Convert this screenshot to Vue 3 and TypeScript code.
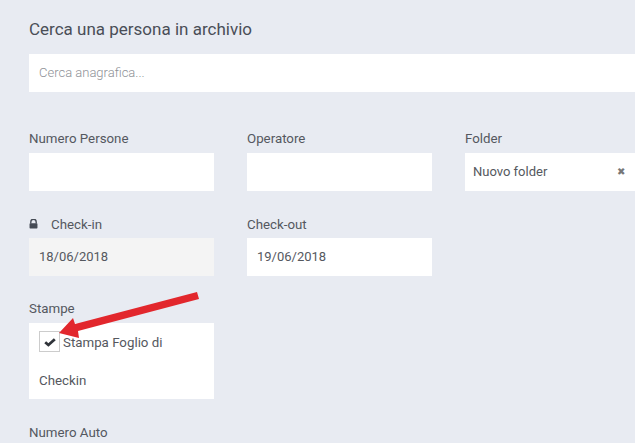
<template>
  <div class="page">
    <h2 class="title">Cerca una persona in archivio</h2>
    <div class="search">Cerca anagrafica...</div>

    <div class="row first">
      <div class="field">
        <label>Numero Persone</label>
        <div class="box"></div>
      </div>
      <div class="field">
        <label>Operatore</label>
        <div class="box"></div>
      </div>
      <div class="field">
        <label>Folder</label>
        <div class="box folder">
          <span>Nuovo folder</span>
          <span class="clear">✖</span>
        </div>
      </div>
    </div>

    <div class="row dates">
      <div class="field">
        <label class="locked">
          <svg class="lock" viewBox="0 0 10 11" width="9" height="10">
            <path d="M2 5V3.2a3 3 0 0 1 6 0V5" fill="none" stroke="#444a54" stroke-width="1.5" />
            <rect x="0.6" y="4.6" width="8.8" height="6" rx="0.8" fill="#444a54" />
          </svg>
          Check-in
        </label>
        <div class="box disabled">18/06/2018</div>
      </div>
      <div class="field">
        <label>Check-out</label>
        <div class="box">19/06/2018</div>
      </div>
    </div>

    <div class="row stampe">
      <div class="field">
        <label>Stampe</label>
        <div class="prints">
          <span class="check">
            <svg viewBox="0 0 12 10" width="12" height="10">
              <path d="M1.2 5.2 4.4 8 10.8 2.2" fill="none" stroke="#30343a" stroke-width="2.8" />
            </svg>
          </span>
          <span class="print-label">Stampa Foglio di Checkin</span>
        </div>
      </div>
    </div>

    <div class="row">
      <div class="field">
        <label>Numero Auto</label>
      </div>
    </div>

    <svg class="arrow" viewBox="0 0 635 443" width="635" height="443">
      <path d="M197 292 75 324 73 318 59 333 79 338 78 331 199 299Z" fill="#e2272d" />
    </svg>
  </div>
</template>

<script setup lang="ts">
</script>

<style>
html,
body {
  margin: 0;
  background: #e8ebf2;
  overflow: hidden;
}
</style>

<style scoped>
.page {
  position: relative;
  width: 635px;
  height: 443px;
  overflow: hidden;
  padding: 19px 0 0 29px;
  box-sizing: border-box;
  background: #e8ebf2;
  font-family: Roboto, "Liberation Sans", sans-serif;
  color: #555960;
}

.title {
  margin: 0 0 15px;
  font-size: 17px;
  line-height: 20px;
  font-weight: 400;
  color: #4a4e57;
}

.search {
  width: 640px;
  height: 38px;
  padding-left: 10px;
  box-sizing: border-box;
  background: #fff;
  font-size: 13px;
  font-weight: 300;
  line-height: 38px;
  color: #8e9196;
}

.row {
  display: flex;
  gap: 33px;
  margin-top: 25px;
}

.row.first {
  margin-top: 38px;
}

.row.stampe {
  margin-top: 24px;
}

.field {
  width: 185px;
  flex: none;
}

.field label {
  display: block;
  height: 23px;
  font-size: 13.3px;
  line-height: 17px;
  color: #54585f;
}

.row.dates label {
  height: 22px;
}

.locked {
  position: relative;
  padding-left: 22px;
}

.lock {
  position: absolute;
  left: 0;
  top: 3px;
}

.box {
  height: 38px;
  padding-left: 10px;
  box-sizing: border-box;
  background: #fff;
  font-size: 13px;
  line-height: 38px;
  color: #55585e;
}

.box.disabled {
  background: #f4f4f4;
}

.folder {
  display: flex;
  justify-content: space-between;
  padding: 0 25px 0 8px;
}

.clear {
  font-size: 10px;
  color: #777;
}

.prints {
  height: 76px;
  padding: 1px 10px 0;
  box-sizing: border-box;
  background: #fff;
  font-size: 13.3px;
  line-height: 38px;
  color: #55585e;
}

.check {
  display: inline-flex;
  align-items: center;
  justify-content: center;
  width: 21px;
  height: 21px;
  margin: 0 3px 3px 0;
  box-sizing: border-box;
  border: 1px solid #ccc;
  background: #fff;
  vertical-align: middle;
}

.arrow {
  position: absolute;
  left: 0;
  top: 0;
  pointer-events: none;
}
</style>
